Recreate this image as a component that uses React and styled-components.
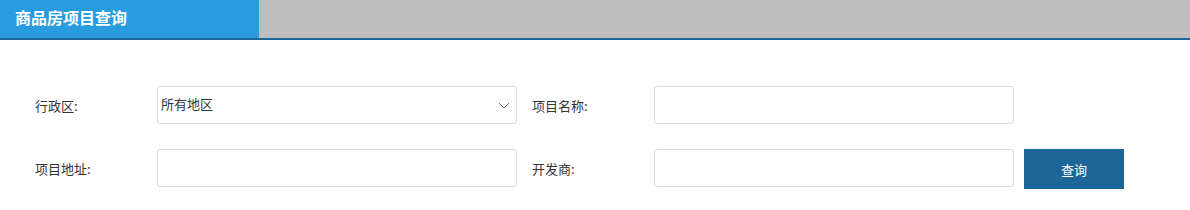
import React from 'react';
import styled, { createGlobalStyle } from 'styled-components';

const GlobalStyle = createGlobalStyle`
    body {
        margin: 0;
        background: #fff;
        font-family: "Noto Sans CJK SC", "Noto Sans", sans-serif;
    }
`;

const TitleBar = styled.div`
    display: flex;
    height: 38px;
    background: #bebebe;
    border-bottom: 2px solid #1c6699;
`;

const TitleTab = styled.div`
    width: 244px;
    padding-left: 15px;
    background: #299cdf;
    color: #fff;
    font-size: 16px;
    font-weight: bold;
    line-height: 34px;
`;

const Form = styled.div`
    display: flex;
    flex-direction: column;
    gap: 25px;
    padding: 46px 0 0 35px;
`;

const Row = styled.div`
    display: flex;
    align-items: flex-start;
`;

const Label = styled.span`
    width: 122px;
    margin-left: ${p => (p.second ? '15px' : '0')};
    padding-top: 2px;
    color: #333;
    font-size: 13px;
    line-height: 36px;
`;

const Box = styled.div`
    box-sizing: border-box;
    display: flex;
    align-items: center;
    width: 360px;
    height: 38px;
    border: 1px solid #dcdcdc;
    border-radius: 3px;
    background: #fff;
`;

const SelectBox = styled(Box)`
    justify-content: space-between;
    padding: 0 6px 4px 3px;
    color: #333;
    font-size: 13px;
`;

const Chevron = styled.svg`
    width: 12px;
    height: 12px;
    margin-top: 4px;
`;

const Button = styled.button`
    width: 100px;
    height: 40px;
    margin-left: 10px;
    border: none;
    background: #1c6699;
    color: #fff;
    font-family: inherit;
    font-size: 13px;
`;

export default function App() {
    return (
        <>
            <GlobalStyle />
            <TitleBar>
                <TitleTab>商品房项目查询</TitleTab>
            </TitleBar>
            <Form>
                <Row>
                    <Label>行政区:</Label>
                    <SelectBox>
                        <span>所有地区</span>
                        <Chevron viewBox="0 0 12 12">
                            <path d="M1 4 L6 9 L11 4" fill="none" stroke="#777" strokeWidth="1" />
                        </Chevron>
                    </SelectBox>
                    <Label second>项目名称:</Label>
                    <Box />
                </Row>
                <Row>
                    <Label>项目地址:</Label>
                    <Box />
                    <Label second>开发商:</Label>
                    <Box />
                    <Button>查询</Button>
                </Row>
            </Form>
        </>
    );
}
